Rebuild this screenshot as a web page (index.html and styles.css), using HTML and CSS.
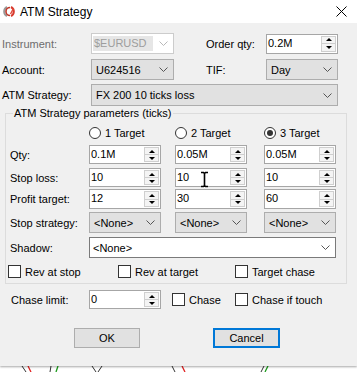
FILE: index.html
```html
<!DOCTYPE html>
<html>
<head>
<meta charset="utf-8">
<link rel="stylesheet" href="styles.css">
</head>
<body>
<div class="window">
  <div class="titlebar">
    <svg class="logo" width="15" height="11" viewBox="0 0 15 11">
      <path d="M5 1 A5 5 0 0 0 5 10" fill="none" stroke="#9a9a9a" stroke-width="2"/>
      <path d="M8 1.5 A4 4 0 0 0 8 9.5" fill="none" stroke="#c0392b" stroke-width="1.6"/>
      <path d="M9 1 A5 5 0 0 1 9 10" fill="none" stroke="#d83a2e" stroke-width="2"/>
      <path d="M11.5 2.5 L8.5 8" fill="none" stroke="#e04a3a" stroke-width="1.5"/>
    </svg>
    <span class="title">ATM Strategy</span>
    <svg class="close" width="11" height="11" viewBox="0 0 11 11">
      <path d="M0.5 0.5 L10.5 10.5 M10.5 0.5 L0.5 10.5" stroke="#000" stroke-width="1"/>
    </svg>
  </div>
  <div class="client">
    <div class="row r1">
      <span class="lbl main disabled">Instrument:</span>
      <div class="combo dis w83"><span class="sel">$EURUSD</span><svg class="chev" width="9" height="5" viewBox="0 0 9 5"><polyline points="0.5,0.5 4.5,4.5 8.5,0.5" fill="none" stroke="#b8b8b8"/></svg></div>
      <span class="lbl side">Order qty:</span>
      <div class="spin h20"><span class="val">0.2M</span><div class="btns"><span class="b"><i class="up"></i></span><span class="b"><i class="dn"></i></span></div></div>
    </div>
    <div class="row r2">
      <span class="lbl main">Account:</span>
      <div class="combo w83"><span class="txt">U624516</span><svg class="chev" width="9" height="5" viewBox="0 0 9 5"><polyline points="0.5,0.5 4.5,4.5 8.5,0.5" fill="none" stroke="#555"/></svg></div>
      <span class="lbl side">TIF:</span>
      <div class="combo w72"><span class="txt">Day</span><svg class="chev" width="9" height="5" viewBox="0 0 9 5"><polyline points="0.5,0.5 4.5,4.5 8.5,0.5" fill="none" stroke="#555"/></svg></div>
    </div>
    <div class="row r3">
      <span class="lbl main">ATM Strategy:</span>
      <div class="combo w247"><span class="txt">FX 200 10 ticks loss</span><svg class="chev" width="9" height="5" viewBox="0 0 9 5"><polyline points="0.5,0.5 4.5,4.5 8.5,0.5" fill="none" stroke="#555"/></svg></div>
    </div>

    <fieldset class="group">
      <legend>ATM Strategy parameters (ticks)</legend>
      <div class="grow radios">
        <span></span>
        <label class="radio"><span class="circ"></span>1 Target</label>
        <label class="radio"><span class="circ"></span>2 Target</label>
        <label class="radio"><span class="circ on"></span>3 Target</label>
      </div>
      <div class="grow g-qty">
        <span class="lbl">Qty:</span>
        <div class="spin"><span class="val">0.1M</span><div class="btns"><span class="b"><i class="up"></i></span><span class="b"><i class="dn"></i></span></div></div>
        <div class="spin"><span class="val">0.05M</span><div class="btns"><span class="b"><i class="up"></i></span><span class="b"><i class="dn"></i></span></div></div>
        <div class="spin"><span class="val">0.05M</span><div class="btns"><span class="b"><i class="up"></i></span><span class="b"><i class="dn"></i></span></div></div>
      </div>
      <div class="grow g-stop">
        <span class="lbl">Stop loss:</span>
        <div class="spin"><span class="val">10</span><div class="btns"><span class="b"><i class="up"></i></span><span class="b"><i class="dn"></i></span></div></div>
        <div class="spin"><span class="val">10</span><div class="btns"><span class="b"><i class="up"></i></span><span class="b"><i class="dn"></i></span></div></div>
        <div class="spin"><span class="val">10</span><div class="btns"><span class="b"><i class="up"></i></span><span class="b"><i class="dn"></i></span></div></div>
      </div>
      <div class="grow g-profit">
        <span class="lbl">Profit target:</span>
        <div class="spin h20"><span class="val">12</span><div class="btns"><span class="b"><i class="up"></i></span><span class="b"><i class="dn"></i></span></div></div>
        <div class="spin h20"><span class="val">30</span><div class="btns"><span class="b"><i class="up"></i></span><span class="b"><i class="dn"></i></span></div></div>
        <div class="spin h20"><span class="val">60</span><div class="btns"><span class="b"><i class="up"></i></span><span class="b"><i class="dn"></i></span></div></div>
      </div>
      <div class="grow g-strat">
        <span class="lbl">Stop strategy:</span>
        <div class="combo w72"><span class="txt">&lt;None&gt;</span><svg class="chev" width="9" height="5" viewBox="0 0 9 5"><polyline points="0.5,0.5 4.5,4.5 8.5,0.5" fill="none" stroke="#555"/></svg></div>
        <div class="combo w72"><span class="txt">&lt;None&gt;</span><svg class="chev" width="9" height="5" viewBox="0 0 9 5"><polyline points="0.5,0.5 4.5,4.5 8.5,0.5" fill="none" stroke="#555"/></svg></div>
        <div class="combo w72"><span class="txt">&lt;None&gt;</span><svg class="chev" width="9" height="5" viewBox="0 0 9 5"><polyline points="0.5,0.5 4.5,4.5 8.5,0.5" fill="none" stroke="#555"/></svg></div>
      </div>
      <div class="grow g-shadow">
        <span class="lbl">Shadow:</span>
        <div class="combo edit w247"><span class="txt">&lt;None&gt;</span><svg class="chev" width="9" height="5" viewBox="0 0 9 5"><polyline points="0.5,0.5 4.5,4.5 8.5,0.5" fill="none" stroke="#555"/></svg></div>
      </div>
      <div class="checks">
        <label class="check c1"><span class="box"></span>Rev at stop</label>
        <label class="check c2"><span class="box"></span>Rev at target</label>
        <label class="check"><span class="box"></span>Target chase</label>
      </div>
    </fieldset>

    <div class="row chase">
      <span class="lbl chase-lbl">Chase limit:</span>
      <div class="spin"><span class="val">0</span><div class="btns"><span class="b"><i class="up"></i></span><span class="b"><i class="dn"></i></span></div></div>
      <label class="check ch1"><span class="box"></span>Chase</label>
      <label class="check"><span class="box"></span>Chase if touch</label>
    </div>

    <div class="row buttons">
      <button class="btn ok">OK</button>
      <button class="btn cancel">Cancel</button>
    </div>
  </div>
</div>
<svg class="chart" width="357" height="6" viewBox="0 0 357 6">
  <path d="M22 0 L26 6" stroke="#333" fill="none"/>
  <path d="M28 0 L31 6" stroke="#e02020" fill="none" stroke-width="1.3"/>
  <path d="M51 0 L50 6" stroke="#333" fill="none"/>
  <path d="M58 0 L56 6" stroke="#1a9a1a" fill="none" stroke-width="1.3"/>
  <path d="M92 0 L96 6 M102 0 L98 6" stroke="#333" fill="none"/>
  <path d="M172 0 L175 6" stroke="#333" fill="none"/>
  <path d="M182 0 L185 6" stroke="#e02020" fill="none" stroke-width="1.3"/>
  <path d="M264 0 L261 6" stroke="#333" fill="none"/>
  <path d="M268 0 L265 6" stroke="#1a9a1a" fill="none" stroke-width="1.3"/>
</svg>
<svg class="ibeam" width="9" height="17" viewBox="0 0 9 17">
  <path d="M1 1.5 H3.5 L4.5 2.5 L5.5 1.5 H8 M4.5 2.5 V14.5 M1 15.5 H3.5 L4.5 14.5 L5.5 15.5 H8" stroke="#fff" stroke-width="3" fill="none"/>
  <path d="M1 1.5 H3.5 L4.5 2.5 L5.5 1.5 H8 M4.5 2.5 V14.5 M1 15.5 H3.5 L4.5 14.5 L5.5 15.5 H8" stroke="#000" stroke-width="1.6" fill="none"/>
</svg>
</body>
</html>
```
FILE: styles.css
```css
* { box-sizing: border-box; }
html, body { margin: 0; padding: 0; }
body {
  width: 357px;
  height: 372px;
  overflow: hidden;
  background: #fff;
  font-family: "Liberation Sans", Arial, sans-serif;
  font-size: 11px;
  color: #000;
  position: relative;
}
.window {
  height: 366px;
  display: flex;
  flex-direction: column;
  box-shadow: 0 1px 2px rgba(0,0,0,0.35);
  position: relative;
  z-index: 1;
}
.titlebar {
  height: 23px;
  background: #fff;
  display: flex;
  align-items: center;
  flex: none;
}
.logo { margin-left: 2px; }
.title { font-size: 12px; margin-left: 3px; }
.close { margin-left: auto; margin-right: 10px; }
.client {
  flex: 1;
  background: #f0f0f0;
  padding: 10px 0 0 2px;
}
.row { display: flex; align-items: center; }
.r1 { height: 21px; }
.r2 { height: 21px; margin-top: 5px; }
.r3 { height: 22px; margin-top: 4px; }
.lbl { white-space: nowrap; }
.main { width: 89px; }
.side { margin-left: 32px; width: 60px; }
.disabled { color: #6d6d6d; }

.combo {
  height: 100%;
  display: flex;
  align-items: center;
  background: #e1e1e1;
  border: 1px solid #adadad;
  padding: 0 5px 0 4px;
}
.combo .txt { flex: 1; white-space: nowrap; }
.combo .chev { flex: none; }
.combo.dis { background: #fff; border-color: #cccccc; padding-left: 1px; }
.combo.dis .sel {
  flex: 1;
  margin-right: 6px;
  height: 15px;
  line-height: 15px;
  padding-left: 1px;
  background: #e6e6e6;
  color: #9d9d9d;
}
.combo.edit { background: #fff; border-color: #7a7a7a; padding-left: 3px; }
.w83 { width: 83px; }
.w72 { width: 72px; }
.w247 { width: 247px; }

.spin {
  width: 72px;
  height: 19px;
  display: flex;
  background: #fff;
  border: 1px solid #a6a6a6;
}
.spin.h20 { height: 20px; }
.spin .val { flex: 1; padding: 2px 0 0 1px; line-height: 13px; }
.btns {
  width: 15px;
  margin: 1px 1px 1px 0;
  display: flex;
  flex-direction: column;
  border: 1px solid #cfcfcf;
  background: #f4f4f4;
}
.btns .b {
  flex: 1;
  display: flex;
  align-items: center;
  justify-content: center;
}
.btns .b + .b { border-top: 1px solid #cfcfcf; }
.up, .dn { width: 0; height: 0; border-left: 3px solid transparent; border-right: 3px solid transparent; }
.up { border-bottom: 3px solid #000; }
.dn { border-top: 3px solid #000; }

.group {
  margin: 1px 0 0 3px;
  padding: 0 0 0 4px;
  width: 342px;
  height: 177px;
  border: 1px solid #dcdcdc;
  min-width: 0;
}
.group legend {
  margin-left: 3px;
  padding: 0 1px;
  line-height: 13px;
}
.grow {
  display: grid;
  grid-template-columns: 79px 86px 89px 72px;
  align-items: center;
}
.radios { height: 13px; margin-top: 6px; }
.g-qty { height: 19px; margin-top: 6px; }
.g-stop { height: 19px; margin-top: 4px; }
.g-profit { height: 20px; margin-top: 2px; }
.g-strat { height: 21px; margin-top: 3px; }
.g-shadow { height: 21px; margin-top: 4px; }
.grow > .spin, .grow > .combo { height: 100%; }
.g-shadow .combo { grid-column: 2 / span 3; }

.radio { display: flex; align-items: center; white-space: nowrap; }
.circ {
  width: 12px; height: 12px;
  border: 1px solid #333;
  border-radius: 50%;
  background: #fff;
  margin-right: 4px;
  display: flex; align-items: center; justify-content: center;
}
.circ.on::after { content: ""; width: 6px; height: 6px; border-radius: 50%; background: #333; }

.checks {
  display: grid;
  grid-template-columns: 110px 117px auto;
  margin: 7px 0 0 -2px;
  height: 13px;
}
.check { display: flex; align-items: center; white-space: nowrap; height: 13px; }
.box {
  width: 13px; height: 13px;
  border: 1px solid #333;
  background: #fff;
  margin-right: 4px;
  flex: none;
}

.chase { height: 19px; margin-top: 6px; }
.chase-lbl { padding-left: 9px; width: 87px; }
.ch1 { margin-left: 11px; width: 63px; }

.buttons { margin-top: 19px; height: 20px; }
.btn {
  font: inherit;
  font-size: 11px;
  color: #000;
  height: 20px;
  background: #e1e1e1;
  border: 1px solid #adadad;
  padding: 0;
}
.ok { margin-left: 72px; width: 66px; }
.cancel { margin-left: 73px; width: 67px; border: 2px solid #0078d7; }

.chart { display: block; }
.ibeam { position: absolute; left: 200px; top: 171px; z-index: 2; }
```
